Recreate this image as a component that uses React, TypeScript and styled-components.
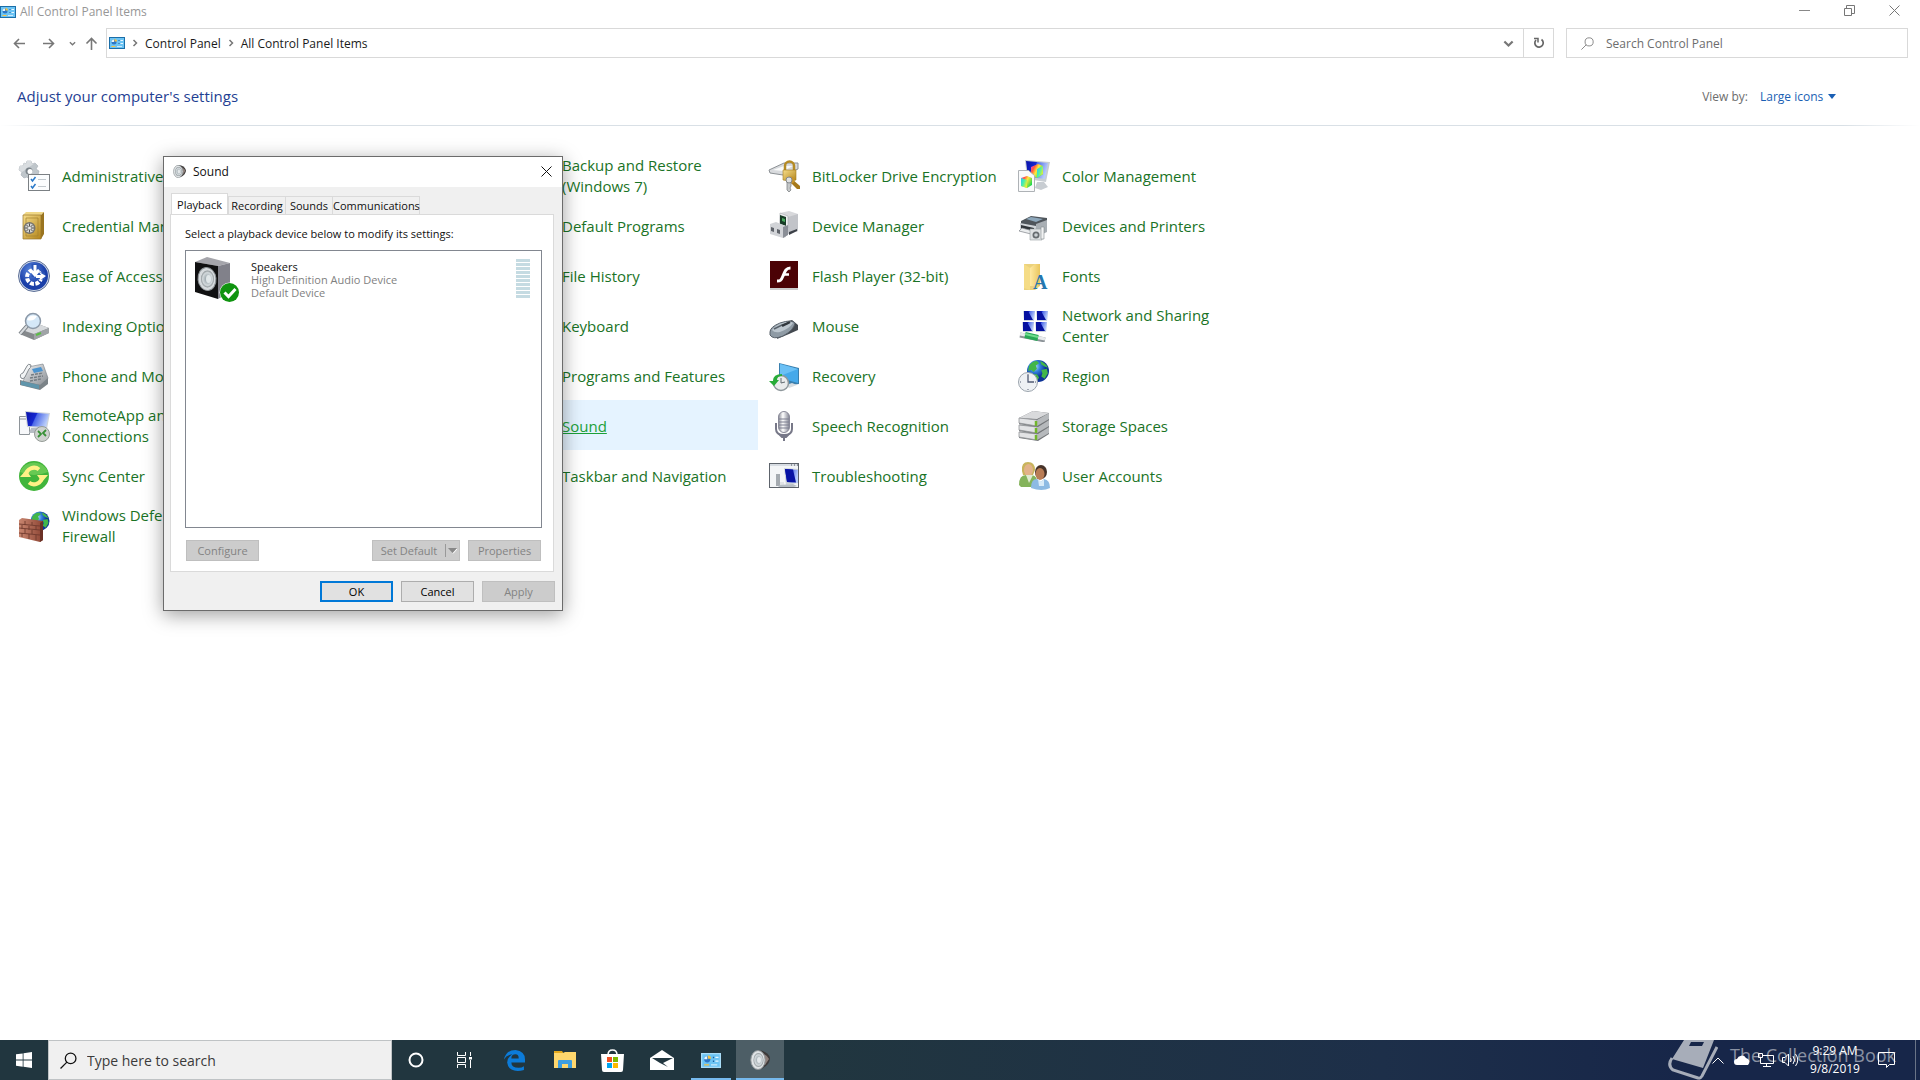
import React from "react";
import styled, { createGlobalStyle, css } from "styled-components";

const GlobalStyle = createGlobalStyle`
  * { box-sizing: border-box; }
  body { margin: 0; background: #fff; font-family: "Open Sans", "Noto Sans", sans-serif; font-size: 12px; overflow: hidden; }
  button, input, select { font: inherit; color: inherit; margin: 0; }
`;

const Desktop = styled.div`
  display: flex;
  flex-direction: column;
  min-height: 100vh;
`;

const MainWindow = styled.main`
  flex: 1;
  display: flex;
  flex-direction: column;
`;

const TitleBar = styled.header`
  display: flex;
  align-items: center;
  height: 24px;
  gap: 4px;
  color: #979797;
`;

const Title = styled.h1`
  flex: 1;
  margin: 0;
  font-size: 12px;
  font-weight: 400;
  line-height: 24px;
`;

const plainButton = css`
  display: inline-flex;
  align-items: center;
  justify-content: center;
  border: 0;
  padding: 0;
  background: none;
`;

const CaptionButtons = styled.div`
  display: flex;
  align-self: flex-start;
  margin-right: 3px;
`;

const CaptionButton = styled.button`
  ${plainButton}
  width: 45px;
  height: 20px;
`;

const NavRow = styled.nav`
  display: flex;
  height: 30px;
  margin: 4px 12px 0 8px;
`;

const NavButton = styled.button<{ $w: number }>`
  ${plainButton}
  width: ${(p) => p.$w}px;
`;

const AddressBar = styled.div`
  flex: 1;
  display: flex;
  align-items: center;
  border: 1px solid #d9d9d9;
  padding-left: 2px;
  margin-right: 12px;
  color: #1a1a1a;
`;

const Crumb = styled.a`
  color: inherit;
  text-decoration: none;
  white-space: nowrap;
`;

const CrumbArrow = styled.span`
  display: flex;
  justify-content: center;
  width: 20px;
`;

const Spacer = styled.div`
  flex: 1;
`;

const AddressButton = styled.button<{ $line?: boolean }>`
  ${plainButton}
  width: 30px;
  align-self: stretch;
  border-left: ${(p) => (p.$line ? "1px solid #d9d9d9" : "0")};
`;

const SearchField = styled.label`
  display: flex;
  align-items: center;
  gap: 12px;
  width: 342px;
  padding-left: 14px;
  border: 1px solid #d9d9d9;
`;

const FieldInput = styled.input<{ $size: number; $tone: string }>`
  flex: 1;
  min-width: 0;
  border: 0;
  padding: 0;
  outline: 0;
  background: none;
  font-size: ${(p) => p.$size}px;
  &::placeholder { color: ${(p) => p.$tone}; opacity: 1; }
`;

const HeadingRow = styled.div`
  display: flex;
  align-items: center;
  justify-content: space-between;
  height: 68px;
  padding: 8px 84px 0 17px;
  background: linear-gradient(90deg, #fff, #d9e0e6 4%, #d9e0e6 96%, #fff) bottom / 100% 1px no-repeat;
`;

const Heading = styled.h2`
  margin: 0;
  font-size: 15px;
  font-weight: 400;
  color: #1f3f93;
`;

const ViewBy = styled.label`
  display: flex;
  align-items: center;
  gap: 12px;
  color: #6d6d6d;
`;

const SelectWrap = styled.span`
  display: flex;
  align-items: center;
  gap: 4px;
`;

const ViewSelect = styled.select`
  appearance: none;
  border: 0;
  padding: 0;
  background: none;
  color: #1a5fb4;
`;

const Items = styled.section`
  display: grid;
  grid-template-columns: repeat(5, 250px);
  grid-auto-rows: 50px;
  padding: 24px 8px;
`;

const Item = styled.a<{ $col: number; $active?: boolean }>`
  grid-column: ${(p) => p.$col};
  display: flex;
  align-items: center;
  gap: 12px;
  padding: 2px 0 0 10px;
  font-size: 15px;
  line-height: 21px;
  white-space: pre;
  color: ${(p) => (p.$active ? "#1ba038" : "#1a7326")};
  background: ${(p) => (p.$active ? "#e5f3ff" : "transparent")};
  text-decoration: ${(p) => (p.$active ? "underline" : "none")};
`;

const Dialog = styled.section`
  position: absolute;
  left: 163px;
  top: 156px;
  width: 400px;
  background: #f0f0f0;
  border: 1px solid #6b6b6b;
  box-shadow: 0 4px 18px rgba(0, 0, 0, 0.38);
  color: #101010;
  font-size: 11px;
`;

const DialogTitle = styled.header`
  display: flex;
  align-items: center;
  gap: 7px;
  height: 30px;
  padding: 0 9px 2px;
  background: #fff;
  font-size: 12px;
`;

const CloseButton = styled.button`
  ${plainButton}
  width: 14px;
  height: 28px;
`;

const Tabs = styled.div`
  display: flex;
  align-items: flex-end;
  height: 27px;
  padding: 0 7px;
`;

const Tab = styled.button<{ $w: number; $on?: boolean }>`
  width: ${(p) => p.$w}px;
  height: ${(p) => (p.$on ? 21 : 18)}px;
  padding: 0;
  border: 1px solid #dadada;
  border-bottom: 0;
  border-right-width: ${(p) => (p.$on ? 1 : 0)}px;
  background: ${(p) => (p.$on ? "#fff" : "#f0f0f0")};
  line-height: 17px;
  &:last-child { border-right-width: 1px; }
`;

const Panel = styled.div`
  margin: 0 8px 0 6px;
  padding: 10px 11px 10px 14px;
  border: 1px solid #dadada;
  background: #fff;
`;

const Prompt = styled.p`
  margin: 0 0 8px;
  line-height: 17px;
`;

const DeviceList = styled.div`
  height: 278px;
  border: 1px solid #828790;
  padding: 6px 11px 0 9px;
`;

const Device = styled.div`
  display: flex;
  align-items: flex-start;
`;

const DeviceText = styled.div`
  flex: 1;
  padding: 3px 0 0 11px;
  line-height: 13px;
  color: #7f7f7f;
`;

const DeviceName = styled.div`
  color: #101010;
`;

const Meter = styled.div`
  display: grid;
  gap: 1px;
  margin-top: 2px;
`;

const MeterBar = styled.span`
  width: 14px;
  height: 3px;
  background: #c5dbe2;
`;

const ButtonRow = styled.div<{ $pad: string }>`
  display: flex;
  justify-content: flex-end;
  gap: 8px;
  padding: ${(p) => p.$pad};
`;

const PushButton = styled.button<{ $primary?: boolean }>`
  width: 73px;
  height: 21px;
  padding: 0;
  line-height: 17px;
  color: #000;
  background: #e1e1e1;
  border: ${(p) => (p.$primary ? "2px solid #0078d7" : "1px solid #adadad")};
  &:disabled { background: #ccc; border-color: #bfbfbf; color: #838383; }
`;

const ConfigureButton = styled(PushButton)`
  margin-right: auto;
`;

const SplitButton = styled.div`
  display: flex;
  width: 88px;
  height: 21px;
  background: #ccc;
  border: 1px solid #bfbfbf;
`;

const SplitMain = styled.button`
  ${plainButton}
  flex: 1;
  &:disabled { color: #838383; }
`;

const SplitArrow = styled.button`
  ${plainButton}
  width: 14px;
  margin: 3px 0;
  border-left: 1px solid #999;
`;

const Taskbar = styled.footer`
  display: flex;
  height: 40px;
  background: linear-gradient(90deg, #21363f 0, #21363f 42%, #1d2f49 72%, #172649 88%);
  color: #fff;
`;

const TaskButton = styled.button<{ $w: number; $running?: boolean; $active?: boolean }>`
  ${plainButton}
  width: ${(p) => p.$w}px;
  background:
    ${(p) => (p.$running ? `linear-gradient(#76b9ed, #76b9ed) bottom / ${p.$active ? "100%" : "40px"} 2px no-repeat` : "none")}
    ${(p) => (p.$active ? ", #4d5e66" : "")};
`;

const TaskSearch = styled.label`
  display: flex;
  align-items: center;
  gap: 10px;
  width: 344px;
  padding-left: 11px;
  background: #f0f0f0;
  border: 1px solid #bfc3c5;
`;

const Tray = styled.div`
  display: flex;
  align-items: center;
  margin-left: auto;
`;

const TrayButton = styled.button<{ $w: number }>`
  ${plainButton}
  width: ${(p) => p.$w}px;
  height: 40px;
`;

const Clock = styled.time`
  width: 66px;
  line-height: 18px;
  text-align: center;
`;

const ShowDesktop = styled.button`
  ${plainButton}
  width: 5px;
  height: 40px;
  margin-left: 11px;
  border-left: 1px solid #6a7487;
`;

const Watermark = styled.div`
  position: absolute;
  right: 24px;
  bottom: 0;
  display: flex;
  align-items: flex-start;
  gap: 12px;
  height: 40px;
  font-size: 18px;
  line-height: 30px;
  color: rgba(255, 255, 255, 0.5);
  pointer-events: none;
`;

const Svg = ({ w = 32, h = w, box, children }: { w?: number; h?: number; box?: string; children: React.ReactNode }) => (
  <svg width={w} height={h} viewBox={box || `0 0 ${w} ${h}`} fill="none" style={{ flex: "none" }} aria-hidden="true">{children}</svg>
);

const Defs = () => (
  <svg width="0" height="0" style={{ position: "absolute" }} aria-hidden="true">
    <defs>
      <linearGradient id="metal" x1="0" y1="0" x2="1" y2="1"><stop stopColor="#f4f5f6" /><stop offset="1" stopColor="#858a90" /></linearGradient>
      <linearGradient id="metalH"><stop stopColor="#8a8c96" /><stop offset=".4" stopColor="#fff" /><stop offset="1" stopColor="#7f8190" /></linearGradient>
      <linearGradient id="gold" x1="0" y1="0" x2="1" y2="1"><stop stopColor="#f6dd8a" /><stop offset="1" stopColor="#b38419" /></linearGradient>
      <linearGradient id="screen" x2="1" y2=".3"><stop stopColor="#0a12a8" /><stop offset=".45" stopColor="#1527d0" /><stop offset=".5" stopColor="#4c68e8" /><stop offset="1" stopColor="#b8ccfa" /></linearGradient>
      <linearGradient id="folder" x1="0" x2="1"><stop stopColor="#ffe9a2" /><stop offset="1" stopColor="#e9c65e" /></linearGradient>
      <linearGradient id="rainbow" x1="0" x2="1" y2=".6"><stop stopColor="#f23cf0" /><stop offset=".3" stopColor="#ff5a3c" /><stop offset=".55" stopColor="#ffe93c" /><stop offset="1" stopColor="#21d84e" /></linearGradient>
      <linearGradient id="rainbowB" x1="0" x2="1" y2=".6"><stop stopColor="#27c8f5" /><stop offset=".5" stopColor="#49f0a8" /><stop offset="1" stopColor="#e8ef32" /></linearGradient>
      <radialGradient id="blueBall" cx=".4" cy=".3"><stop stopColor="#5f8be0" /><stop offset="1" stopColor="#1a3fa8" /></radialGradient>
      <radialGradient id="earth" cx=".35" cy=".3"><stop stopColor="#b9e4fb" /><stop offset=".5" stopColor="#2f7fdb" /><stop offset="1" stopColor="#0d3397" /></radialGradient>
      <radialGradient id="cone"><stop stopColor="#8b9aa0" /><stop offset=".35" stopColor="#a9b3b8" /><stop offset=".75" stopColor="#d3d9dc" /><stop offset="1" stopColor="#8a9194" /></radialGradient>
      <linearGradient id="brick" x1="0" x2="1"><stop stopColor="#c98670" /><stop offset="1" stopColor="#8d4534" /></linearGradient>
    </defs>
  </svg>
);

const Earth = ({ x, y, r }: { x: number; y: number; r: number }) => (
  <g transform={`translate(${x} ${y}) scale(${r / 10})`}>
    <circle r="10" fill="url(#earth)" />
    <path d="M-8-5Q-5-9-1-9L1-7-2-5-1-2-4 1-6-1-9 0zM2-9Q7-7 9-3L6-4 3-6zM3-1 8-2 9 2 6 7 3 5 4 2zM-4 3-1 3 1 6-1 9-3 8z" fill="#42b649" />
  </g>
);

const ControlPanelIcon = ({ w = 16, edge = "#1b6ea8" }: { w?: number; edge?: string }) => (
  <Svg w={w} h={(w * 3) / 4} box="0 0 16 12">
    <rect x=".5" y=".5" width="15" height="11" fill="#6cc4f4" stroke={edge} />
    <circle cx="5" cy="5" r="2.500" fill="#2c77c8" />
    <path d="M5 5H2.500A2.500 2.500 0 0 1 5 2.500z" fill="#e8f6fe" /><path d="M5.500 4.500V2A2.500 2.500 0 0 1 8 4.500z" fill="#f5c242" />
    <path d="M9.500 3.500h1M9.500 6.500h1" stroke="#1d5f9f" strokeWidth="1.200" /><path d="M11.500 3.500h2.500M11.500 6.500h2.500" stroke="#e8f6fe" /><path d="M2.500 9.500h4" stroke="#f5c242" /><path d="M8 9.500h5" stroke="#cdeafa" />
  </Svg>
);

const icons: Record<string, React.ReactNode> = {
  admin: <Svg>
    <g transform="translate(11 10)"><path d="M-2-9H2L3-6 6-7 9-4 7-1 10 1 9 5 6 5 4 9 0 9-2 7-5 8-8 5-7 2-10 0-9-4-6-4-5-7-3-6z" fill="#bfc6cb" stroke="#a6adb3" strokeWidth=".6" /><path d="M-2-9H2L3-6 6-7-7 2-10 0-9-4-6-4-5-7-3-6z" fill="#d9dde0" /><circle cx="0" cy="1" r="3.500" fill="#7c858b" /><circle cx="1" cy="1.500" r="2.500" fill="#fff" /></g>
    <rect x="10.500" y="14.500" width="21" height="16" fill="#fbfdfe" stroke="#7b8084" /><path d="M13 19l1.500 2 3-4M13 26l1.500 2 3-4" stroke="#2778c8" strokeWidth="1.500" /><path d="M20 19.500h8M20 26.500h8" stroke="#c2c9ce" />
  </Svg>,
  vault: <Svg>
    <path d="M5 5 8 2h18l-3 3z" fill="#f0d887" /><path d="M23 5l3-3v22l-3 5z" fill="#9a7420" /><path d="M5 5h18v24H5z" fill="url(#gold)" stroke="#98772b" strokeWidth=".7" /><path d="M8 8h12v18H8z" stroke="#a5812e" strokeWidth=".7" /><circle cx="11.500" cy="18" r="6" fill="#77746c" /><circle cx="11.500" cy="18" r="4.500" fill="#d5d6d4" /><path d="M11.500 13.500v9M7 18h9M8.500 15l6 6M14.500 15l-6 6" stroke="#55534e" /><circle cx="11.500" cy="18" r="1.500" fill="#eee" />
  </Svg>,
  ease: <Svg>
    <circle cx="16" cy="16" r="15.500" fill="#d2dcec" stroke="#5d6f95" /><circle cx="16" cy="16" r="14" fill="url(#blueBall)" /><circle cx="16" cy="17" r="7" stroke="#fff" strokeWidth="4" strokeDasharray="4 1.500" /><path d="M17 17V4M17 16h10" stroke="#2b56b8" strokeWidth="7" /><path d="M17 5v8M12.500 10l4.500 5 4-5" stroke="#fff" strokeWidth="3" /><path d="M18 15h5l-2-3 7 4-7 5 1-3h-4z" fill="#fff" />
  </Svg>,
  index: <Svg>
    <path d="M4 20 17 13l14 5v5l-15 7L4 25z" fill="#85898c" /><path d="M4 20 17 13l14 5-15 6z" fill="#d7dadd" /><path d="M16 24l15-6v5l-15 7z" fill="#a0a4a7" /><path d="M18 25l5-2" stroke="#59bd43" strokeWidth="2" /><path d="M9 16 2 24" stroke="#777d83" strokeWidth="4" /><path d="M9 16 2 24" stroke="#d6dadd" strokeWidth="2" /><circle cx="15" cy="11" r="7.500" fill="#d5e8f8" stroke="#8c99a8" strokeWidth="1.500" /><path d="M9 10q2-6 10-4-3 6-10 4" fill="#fff" />
  </Svg>,
  phone: <Svg>
    <path d="M10 7 25 4l5 14-4 8-21-4z" fill="url(#metal)" stroke="#777e84" strokeWidth=".6" /><path d="M2 20l20 5 8-7v6l-8 6-20-5z" fill="#7b8388" /><path d="M3 21l18 4v4L3 25z" fill="#5f95ab" /><path d="M14 9l9-2 2 4-9 2z" fill="#4b94cf" /><path d="M13 15l12-2M12 18l13-2M12 21l11-2" stroke="#747c82" strokeWidth="1.500" strokeDasharray="3 1" /><path d="M3 18Q1 14 5 13L9 6q1-3 4-1 0 3-2 4L7 17q-2 3-4 1z" fill="#f2f4f5" stroke="#858b90" />
  </Svg>,
  remote: <Svg>
    <path d="M1.500 6.500h10v18h-10z" fill="#f7f8fa" stroke="#8e9499" /><path d="M2 9h6" stroke="#8e9499" /><path d="M7 1l25 2-3 16-20-2z" fill="#cfd4da" /><path d="M8 2l23 2-3 13-18-1z" fill="url(#screen)" /><path d="M13 18h9l2 5H11z" fill="#b7bdc4" /><circle cx="24" cy="24" r="7.500" fill="#cfd3cf" stroke="#959b97" /><path d="M20 21l3 3-3 3M28 20l-3 3 3 3" stroke="#389137" strokeWidth="1.800" />
  </Svg>,
  sync: <Svg>
    <circle cx="16" cy="16" r="15" fill="#41b53b" /><path d="M2 12A15 15 0 0 1 30 12Q16 18 2 12z" fill="#68c953" /><path d="M8 15A8 8 0 0 1 21 9.500" stroke="#fff187" strokeWidth="4" /><path d="M24 17A8 8 0 0 1 11 22.500" stroke="#fff187" strokeWidth="4" /><path d="M2 17h11L8 10zM19 15h11l-6 7z" fill="#fff187" />
  </Svg>,
  firewall: <Svg>
    <Earth x={22} y={11} r={9.5} /><path d="M1 10l3-2 21 3v19l-3 2L1 27z" fill="url(#brick)" /><path d="M22 13l3-2v19l-3 2z" fill="#6b3126" /><path d="M1 14l21 2M1 18l21 2M1 23l21 2M7 11v4M14 12v3M4 15v4M11 16v4M18 16v4M7 19v4M14 20v4M4 23v4M11 24v5M18 25v5" stroke="#713a2e" strokeWidth=".9" />
  </Svg>,
  bitlocker: <Svg>
    <path d="M1 10 16 3h14v6L15 15 2 13z" fill="#d8dadd" stroke="#8c9195" /><path d="M5 10l11-4h9l-10 5z" fill="#f9fafa" /><path d="M17 12V6a4.500 4.500 0 0 1 9 0v6" stroke="#b58b25" strokeWidth="2.500" /><path d="M15 10h13v10q-6 2-13 0z" fill="url(#gold)" stroke="#a57d20" strokeWidth=".6" /><path d="M24 19l8 7v3h-3l-7-7z" fill="#a6791b" /><circle cx="23" cy="20" r="3.500" fill="#c6942c" /><path d="M19 21v9l2 2 2-2-1-2 1-2v-5z" fill="#c5c8c9" stroke="#73777a" strokeWidth=".7" /><circle cx="21" cy="20" r="3" fill="#dfe1e2" stroke="#83878a" />
  </Svg>,
  device: <Svg>
    <path d="M12 3 21 1l9 3v17l-9 3-10-4z" fill="#d7d8db" /><path d="M20 7l10-3v17l-10 3z" fill="#c2c4c9" /><path d="M12 3l8 3v12l-8-3z" fill="#f0f0f2" stroke="#a8abb0" strokeWidth=".6" /><path d="M12 5l6 2v9l-6-2z" fill="#183c26" /><path d="M14 8l3 1v3l-3-1z" fill="#49a85e" /><path d="M2 14l6-2 10 4v11l-3 1L2 24z" fill="#d1d3d7" /><path d="M15 17l5-2v10l-5 3z" fill="#8a8e96" /><path d="M3 17l3 1v4l-3-1zM9 19l3 1v4l-3-1z" fill="#60646b" /><path d="M21 22l8-3v2l-8 4z" fill="#3c4148" />
  </Svg>,
  flash: <Svg>
    <rect x="2" y="1" width="28" height="29" fill="#aaa" opacity=".6" /><rect x="2" y="1" width="28" height="27" fill="#4b0205" /><path d="M22.500 8C18 8 17 11 15 16S12 21 9 21" stroke="#fff" strokeWidth="3" /><path d="M16 14.500h5" stroke="#fff" strokeWidth="2.500" />
  </Svg>,
  mouse: <Svg>
    <path d="M12 14 24 10l6 5v5l-9 4-12 5z" fill="#434950" /><path d="M2 22Q2 17 12 13q12-4 15 0-1 7-12 13-10 4-13-1z" fill="#8f9ba5" stroke="#59626b" /><path d="M4 20Q8 14 18 12q5-1 7 1-4 6-13 9-6 1-8-2z" fill="#bcc6ce" /><path d="M6 19l8-4 7-2" stroke="#59626b" strokeWidth="1.500" /><path d="M14 16l8-4" stroke="#30363c" strokeWidth="2.500" />
  </Svg>,
  recovery: <Svg>
    <path d="M11 3l20 5v16l-7 1-13-5z" fill="#397fae" /><path d="M12 4l18 5v14l-18-5z" fill="#45a9ea" /><path d="M12 4l18 5-18 7z" fill="#6bc0f5" /><path d="M18 25l6-2 5 2-8 3z" fill="#d7dde1" /><circle cx="13" cy="23" r="7.500" fill="#e9ebec" stroke="#8e979b" strokeWidth="1.500" /><path d="M13 18v5l4-1" stroke="#616a70" /><path d="M14 14Q5 14 5 21H1l5 5 5-6H9q0-4 5-4z" fill="#28ac38" />
  </Svg>,
  speech: <Svg>
    <rect x="10.500" y="1.500" width="11" height="21" rx="5.500" fill="url(#metalH)" stroke="#8a8a99" /><path d="M11 9h10M11 12h10M11 15h10M11 18h10" stroke="#7d7e90" /><path d="M8 13v6q0 6 8 6t8-6v-6" stroke="#777888" strokeWidth="2" /><path d="M16 25v6M12 25h8l-2 2h-4z" stroke="#777888" strokeWidth="2" />
  </Svg>,
  trouble: <Svg>
    <rect x="1.500" y="3.500" width="29" height="24" fill="#f3f5f7" stroke="#5d636b" /><path d="M2 5h28" stroke="#d7dce2" strokeWidth="2" /><path d="M23 5h1M26 5h1M29 5h1" stroke="#4a5059" /><path d="M16 8l14 1v14l-12 2z" fill="#cdd3d9" /><path d="M17 9l13 1v13l-11-1z" fill="url(#screen)" /><path d="M17 9l8 .5 3 13-9-.5z" fill="#0712a4" /><path d="M8 14h4v12H8z" fill="#a4aab0" /><path d="M12 22h4v4h-4z" fill="#e0e3e6" /><path d="M12 25l13-1 4 2-3 1H10z" fill="#b7bec5" />
  </Svg>,
  color: <Svg>
    <path d="M7 0l25 2-4 20-19-3z" fill="#c7cdd3" /><path d="M8 1l22 2-3 16-17-2z" fill="url(#screen)" /><path d="M19 22h7l4 5-7 3-6-2z" fill="#c8cdd2" /><path d="M13 7l7-3 5 2v8l-6 4-6-3z" fill="url(#rainbow)" /><path d="M19 9l6-3v8l-6 4z" fill="url(#rainbowB)" /><path d="M.500 10.500h10l6 5v16H.500z" fill="#f9fafb" stroke="#aeb2b6" /><path d="M3 18l6-2 5 2v7l-5 3-6-2z" fill="url(#rainbow)" /><path d="M3 18l6 2v8l-6-2z" fill="url(#rainbowB)" />
  </Svg>,
  printer: <Svg>
    <path d="M3 11 13 6l16 2v7l-11 4-15-3z" fill="#4f555b" /><path d="M8 9l5-2 12 2-7 3z" fill="#8da7bb" /><path d="M2 13l16 3v8L2 20z" fill="#d0d4d8" /><path d="M3 15l13 3v3L3 18z" fill="#30353a" /><path d="M1 21l3-3 11 3-2 3z" fill="#eceeef" stroke="#7e8388" strokeWidth=".7" /><path d="M18 14l11-4v12l-11 5z" fill="#a9afb4" /><path d="M12 19h12v11H12z" fill="#dfe1e3" stroke="#999ea3" strokeWidth=".6" /><path d="M23 17h3v12h-3z" fill="#f1f2f3" stroke="#85898d" strokeWidth=".6" /><circle cx="18" cy="25" r="3.500" fill="#676c70" /><circle cx="18" cy="25" r="1.800" fill="#ccd1d4" />
  </Svg>,
  fonts: <Svg>
    <path d="M6 4h16v22l-5 4H6z" fill="#ebd27d" /><path d="M6 4l6 4v22l-6-2z" fill="#f5dc86" /><path d="M12 8l5-4h5v22H12z" fill="url(#folder)" /><text x="15" y="29" fontFamily="Liberation Serif, serif" fontSize="20" fontWeight="700" fill="#2477af">A</text>
  </Svg>,
  network: <Svg>
    {[[5, 1], [18, 1], [4, 12], [17, 12]].map(([x, y]) => <g key={`${x}-${y}`} transform={`translate(${x} ${y})`}><path d="M0 0h12l-1 10H1z" fill="#cdd5dc" /><path d="M1 0h11l-1 9H1z" fill="url(#screen)" /><path d="M1 0h4l5 9H1z" fill="#0611a0" /></g>)}
    <path d="M2 25l25 5" stroke="#8c9398" strokeWidth="5" /><path d="M2 24l25 5" stroke="#e8ebed" strokeWidth="3" /><path d="M7 25l13 3" stroke="#27a956" strokeWidth="6" /><path d="M7 24l13 3" stroke="#70dc8e" strokeWidth="2" />
  </Svg>,
  region: <Svg><Earth x={20} y={11} r={11} /><circle cx="10" cy="22" r="9.500" fill="#eef1f4" stroke="#9ba4ad" /><path d="M10 15v7h6" stroke="#525b73" strokeWidth="1.300" /><path d="M10 14v1M10 29v1M2 22h1M17 22h1" stroke="#596175" /></Svg>,
  storage: <Svg>{[19, 12, 5].map((y) => <g key={y} transform={`translate(0 ${y})`}><path d="M1 3 15-4l16 2v7l-11 7L1 9z" fill="#74777a" /><path d="M1 3 15-4l16 2-12 6z" fill="#d9dadc" /><path d="M1 3l18 2v6L1 8z" fill="#e2e3e5" stroke="#94979a" strokeWidth=".8" /><path d="M19 5l12-7v6l-12 7z" fill="#b6b9bc" /><path d="M18 6v5" stroke="#71b52c" strokeWidth="2.500" /></g>)}</Svg>,
  users: <Svg>
    <path d="M4 11Q3 2 10 2t7 8l-2 5H5z" fill="#c9b45c" /><ellipse cx="10.500" cy="10" rx="4.500" ry="6" fill="#e2b28a" /><path d="M1 25q0-10 7-10l3 3 3-3q6 1 5 9l-6 3H3z" fill="#84b35b" /><path d="M8 15l3 8 4-8z" fill="#dfead0" /><ellipse cx="23" cy="12" rx="6" ry="7" fill="#473329" /><ellipse cx="22" cy="14" rx="4.500" ry="6" fill="#b97c55" /><path d="M13 28q0-9 6-9l4 3 3-3q6 1 6 9-8 4-19 0z" fill="#8dbae3" /><path d="M20 19l3 3 3-3v7h-5z" fill="#d9ebf8" />
  </Svg>,
  sound: <Svg><path d="M6 4h13l7 3v20H6z" fill="#888c93" /><circle cx="14" cy="16" r="8" fill="url(#cone)" /></Svg>,
};

type Entry = [col: number, icon: string, label: string];
const entries: Entry[] = [
  [1, "admin", "Administrative Tools"], [3, "vault", "Backup and Restore\n(Windows 7)"], [4, "bitlocker", "BitLocker Drive Encryption"], [5, "color", "Color Management"],
  [1, "vault", "Credential Manager"], [3, "sync", "Default Programs"], [4, "device", "Device Manager"], [5, "printer", "Devices and Printers"],
  [1, "ease", "Ease of Access Center"], [3, "fonts", "File History"], [4, "flash", "Flash Player (32-bit)"], [5, "fonts", "Fonts"],
  [1, "index", "Indexing Options"], [3, "device", "Keyboard"], [4, "mouse", "Mouse"], [5, "network", "Network and Sharing\nCenter"],
  [1, "phone", "Phone and Modem"], [3, "trouble", "Programs and Features"], [4, "recovery", "Recovery"], [5, "region", "Region"],
  [1, "remote", "RemoteApp and Desktop\nConnections"], [3, "sound", "Sound"], [4, "speech", "Speech Recognition"], [5, "storage", "Storage Spaces"],
  [1, "sync", "Sync Center"], [3, "trouble", "Taskbar and Navigation"], [4, "trouble", "Troubleshooting"], [5, "users", "User Accounts"],
  [1, "firewall", "Windows Defender\nFirewall"],
];

const Chevron = ({ d, w = 8, color = "#777", sw = 1.5 }: { d: "left" | "right" | "down" | "up"; w?: number; color?: string; sw?: number }) => {
  const turn = { right: 0, down: 90, left: 180, up: 270 }[d];
  return <Svg w={w} box="0 0 8 8"><path d="M2.500 1 5.500 4 2.500 7" stroke={color} strokeWidth={sw} transform={`rotate(${turn} 4 4)`} /></Svg>;
};

const Magnifier = ({ w, color }: { w: number; color: string }) => (
  <Svg w={w} box="0 0 16 16"><circle cx="10" cy="6" r="5" stroke={color} strokeWidth="1.200" /><path d="M6.500 9.500.5 15.500" stroke={color} strokeWidth="1.200" /></Svg>
);

const SpeakerCone = ({ w }: { w: number }) => (
  <Svg w={w} box="0 0 20 20"><path d="M8 0q10 1 12 8 0 7-9 11z" fill="#3d3a3a" /><path d="M14 4q4 2 5 5l-4 6z" fill="#8f807b" /><ellipse cx="8" cy="10" rx="7.200" ry="9.500" fill="#dfe3e5" stroke="#8d9396" /><ellipse cx="8.500" cy="10" rx="5" ry="7" fill="url(#cone)" /><ellipse cx="9" cy="10" rx="2" ry="3" fill="#e4e8ea" /></Svg>
);

const DialogSpeaker = () => (
  <Svg w={45} h={46}>
    <path d="M0 5 12 0l23 6-12 3z" fill="#a5a5ab" /><path d="M23 9l12-3v29l-12 7z" fill="#81818a" /><path d="M0 5l23 4v33L0 35z" fill="#101011" />
    <ellipse cx="12" cy="22" rx="9" ry="11.500" fill="#d6dadd" stroke="#8a9093" transform="rotate(-6 12 22)" /><ellipse cx="12.500" cy="22" rx="6.500" ry="8.500" fill="url(#cone)" /><ellipse cx="13.500" cy="22" rx="2.500" ry="4" fill="#e1e7e9" />
    <circle cx="34.500" cy="35.500" r="10" fill="#fff" /><circle cx="34.500" cy="35.500" r="9.500" fill="#109410" /><path d="M29.500 35.500l4 4 7-7.500" stroke="#fff" strokeWidth="3" />
  </Svg>
);

export default function App() {
  return (
    <Desktop>
      <GlobalStyle />
      <Defs />
      <MainWindow>
        <TitleBar>
          <ControlPanelIcon />
          <Title>All Control Panel Items</Title>
          <CaptionButtons>
            <CaptionButton aria-label="Minimize"><Svg w={11}><path d="M0 5.500h11" stroke="#888" /></Svg></CaptionButton>
            <CaptionButton aria-label="Restore"><Svg w={11}><path d="M.5 3.500h7v7h-7zM2.500 3.500v-3h8v8h-3" stroke="#777" /></Svg></CaptionButton>
            <CaptionButton aria-label="Close"><Svg w={11}><path d="M.5.5l10 10M10.500.5l-10 10" stroke="#777" /></Svg></CaptionButton>
          </CaptionButtons>
        </TitleBar>
        <NavRow>
          <NavButton $w={22} aria-label="Back"><Svg w={13}><path d="M12 6.500H1.500M6 2 1.500 6.500 6 11" stroke="#777" strokeWidth="1.600" /></Svg></NavButton>
          <NavButton $w={37} aria-label="Forward"><Svg w={13}><path d="M1 6.500h10.500M7 2l4.500 4.500L7 11" stroke="#777" strokeWidth="1.600" /></Svg></NavButton>
          <NavButton $w={10} aria-label="Recent locations"><Chevron d="down" w={7} /></NavButton>
          <NavButton $w={29} aria-label="Up"><Svg w={13}><path d="M6.500 13V1.500M1.500 6.500l5-5 5 5" stroke="#777" strokeWidth="1.600" /></Svg></NavButton>
          <AddressBar>
            <ControlPanelIcon />
            <CrumbArrow><Chevron d="right" /></CrumbArrow>
            <Crumb href="#">Control Panel</Crumb>
            <CrumbArrow><Chevron d="right" /></CrumbArrow>
            <Crumb href="#">All Control Panel Items</Crumb>
            <Spacer />
            <AddressButton aria-label="Previous locations"><Chevron d="down" w={11} sw={1.6} /></AddressButton>
            <AddressButton $line aria-label="Refresh"><Svg w={12}><path d="M8.500 2.500A4.200 4.200 0 1 1 3 3" stroke="#666" strokeWidth="1.700" /><path d="M1 1.500h4v4" stroke="#666" strokeWidth="1.500" /></Svg></AddressButton>
          </AddressBar>
          <SearchField>
            <Magnifier w={13} color="#888" />
            <FieldInput aria-label="Search Control Panel" placeholder="Search Control Panel" $size={12} $tone="#6d6d6d" />
          </SearchField>
        </NavRow>
        <HeadingRow>
          <Heading>Adjust your computer's settings</Heading>
          <ViewBy>
            View by:
            <SelectWrap>
              <ViewSelect><option>Large icons</option></ViewSelect>
              <Svg w={8} h={5}><path d="M0 0h8L4 5z" fill="#1a5fb4" /></Svg>
            </SelectWrap>
          </ViewBy>
        </HeadingRow>
        <Items>
          {entries.map(([col, icon, label]) => (
            <Item key={label} href="#" $col={col} $active={label === "Sound"}>{icons[icon]}{label}</Item>
          ))}
        </Items>
      </MainWindow>

      <Dialog role="dialog" aria-label="Sound">
        <DialogTitle>
          <SpeakerCone w={13} />
          Sound
          <Spacer />
          <CloseButton aria-label="Close"><Svg w={11}><path d="M.5.5l10 10M10.500.5l-10 10" stroke="#111" /></Svg></CloseButton>
        </DialogTitle>
        <Tabs role="tablist">
          <Tab role="tab" aria-selected $w={57} $on>Playback</Tab>
          <Tab role="tab" $w={57}>Recording</Tab>
          <Tab role="tab" $w={47}>Sounds</Tab>
          <Tab role="tab" $w={88}>Communications</Tab>
        </Tabs>
        <Panel role="tabpanel">
          <Prompt>Select a playback device below to modify its settings:</Prompt>
          <DeviceList role="listbox" aria-label="Playback devices">
            <Device role="option">
              <DialogSpeaker />
              <DeviceText><DeviceName>Speakers</DeviceName>High Definition Audio Device<br />Default Device</DeviceText>
              <Meter>{Array.from({ length: 10 }, (_, i) => <MeterBar key={i} />)}</Meter>
            </Device>
          </DeviceList>
          <ButtonRow $pad="12px 1px 0">
            <ConfigureButton disabled>Configure</ConfigureButton>
            <SplitButton>
              <SplitMain disabled>Set Default</SplitMain>
              <SplitArrow disabled aria-label="More default choices"><Svg w={9} h={6}><path d="M0 0h9L4.500 5z" fill="#888" /><path d="M9 1 5 5.500" stroke="#fff" /></Svg></SplitArrow>
            </SplitButton>
            <PushButton disabled>Properties</PushButton>
          </ButtonRow>
        </Panel>
        <ButtonRow $pad="9px 7px 8px">
          <PushButton $primary>OK</PushButton>
          <PushButton>Cancel</PushButton>
          <PushButton disabled>Apply</PushButton>
        </ButtonRow>
      </Dialog>

      <Taskbar>
        <TaskButton $w={48} aria-label="Start"><Svg w={16}><path d="M0 2.300 6.700 1.400v6.200H0zM7.500 1.300 16 0v7.600H7.500zM0 8.400h6.700v6.300L0 13.700zM7.500 8.400H16V16l-8.500-1.200z" fill="#fff" /></Svg></TaskButton>
        <TaskSearch>
          <Magnifier w={17} color="#111" />
          <FieldInput aria-label="Type here to search" placeholder="Type here to search" $size={14} $tone="#3b3b3b" />
        </TaskSearch>
        <TaskButton $w={48} aria-label="Cortana"><Svg w={16}><circle cx="8" cy="8" r="6.500" stroke="#fff" strokeWidth="2" /></Svg></TaskButton>
        <TaskButton $w={48} aria-label="Task View"><Svg w={17} h={16}><path d="M1.500 0v3.500h8V0M1.500 16v-3.500h8V16M1.500 5.500h8v5h-8zM14.500 0v4M14.500 8v8" stroke="#fff" /><path d="M13 5h3v2.500h-3z" fill="#fff" /></Svg></TaskButton>
        <TaskButton $w={53} aria-label="Edge"><Svg w={21} box="0 0 20 20"><path d="M0 9Q2 0 11 0q9 1 9 9v3H7q0 5 7 5 3 0 5-1.500V19q-3 1-6 1-9 0-10-8 0-5 5-8Q2 5 0 9zm7-1h7q0-4-3-4-4 0-4 4z" fill="#0c7bd8" /></Svg></TaskButton>
        <TaskButton $w={47} aria-label="File Explorer"><Svg w={22} h={18}><path d="M0 0h8l2 3H0z" fill="#e5a91d" /><path d="M0 2h9l2-1h11v16H0z" fill="#ffd76d" /><path d="M4 17V10q0-1 1-1h12q1 0 1 1v7h-4v-4H8v4z" fill="#3e9ee0" /></Svg></TaskButton>
        <TaskButton $w={49} aria-label="Store"><Svg w={23} h={23}><path d="M7 6q0-5 4.500-5T16 6" stroke="#fff" strokeWidth="1.500" /><path d="M0 5h23l-1 16q0 2-2 2H3q-2 0-2-2z" fill="#fff" /><path d="M6 8h5v5H6z" fill="#f25022" /><path d="M12 8h5v5h-5z" fill="#7fba00" /><path d="M6 14h5v5H6z" fill="#00a4ef" /><path d="M12 14h5v5h-5z" fill="#ffb900" /></Svg></TaskButton>
        <TaskButton $w={49} aria-label="Mail"><Svg w={24} h={20}><path d="M0 8 12 0l12 8v12H0z" fill="#fff" /><path d="M2 8h21l-10 5 5 4-8-4z" fill="#21363f" /></Svg></TaskButton>
        <TaskButton $w={50} $running aria-label="Control Panel"><ControlPanelIcon w={20} edge="#a9ddf8" /></TaskButton>
        <TaskButton $w={48} $running $active aria-label="Sound"><SpeakerCone w={20} /></TaskButton>
        <Tray>
          <TrayButton $w={24} aria-label="Hidden icons"><Svg w={12} h={7}><path d="M.5 6.500 6 1l5.500 5.500" stroke="#fff" /></Svg></TrayButton>
          <TrayButton $w={24} aria-label="OneDrive"><Svg w={16} h={10}><path d="M3 10a3 3 0 0 1 0-6 5 5 0 0 1 9-1 4 4 0 0 1 2 7z" fill="#fff" /></Svg></TrayButton>
          <TrayButton $w={24} aria-label="Network"><Svg w={16} h={14}><path d="M4.500 2.500h11v8h-11M.5.500h4v4h-4zM2.500 5v5.500h3M8.500 11v2.500M5 13.500h8" stroke="#fff" /></Svg></TrayButton>
          <TrayButton $w={24} aria-label="Volume"><Svg w={17} h={14}><path d="M.5 4.500h2.500L6.500 1v12L3 9.500H.5z" stroke="#fff" /><path d="M8.500 5q1.500 2 0 4M11 3q3 4 0 8M13.500 1q4.500 6 0 12" stroke="#fff" /></Svg></TrayButton>
          <Clock>9:29 AM<br />9/8/2019</Clock>
          <TrayButton $w={36} aria-label="Notifications"><Svg w={17} h={16}><path d="M.5.500h16v12h-5l-3 3v-3h-8z" stroke="#fff" /></Svg></TrayButton>
          <ShowDesktop aria-label="Show desktop" />
        </Tray>
      </Taskbar>
      <Watermark>
        <Svg w={51} h={40}>
          <path fillRule="evenodd" d="M17 0h30L36 28 5 19zM24 2l-2 4h13l2-4z" fill="#a7adb9" />
          <path d="M5 18q-5 7 1 12l25 8q2 1 4-2L50 7" stroke="#a7adb9" strokeWidth="3" />
        </Svg>
        The Collection Book
      </Watermark>
    </Desktop>
  );
}
